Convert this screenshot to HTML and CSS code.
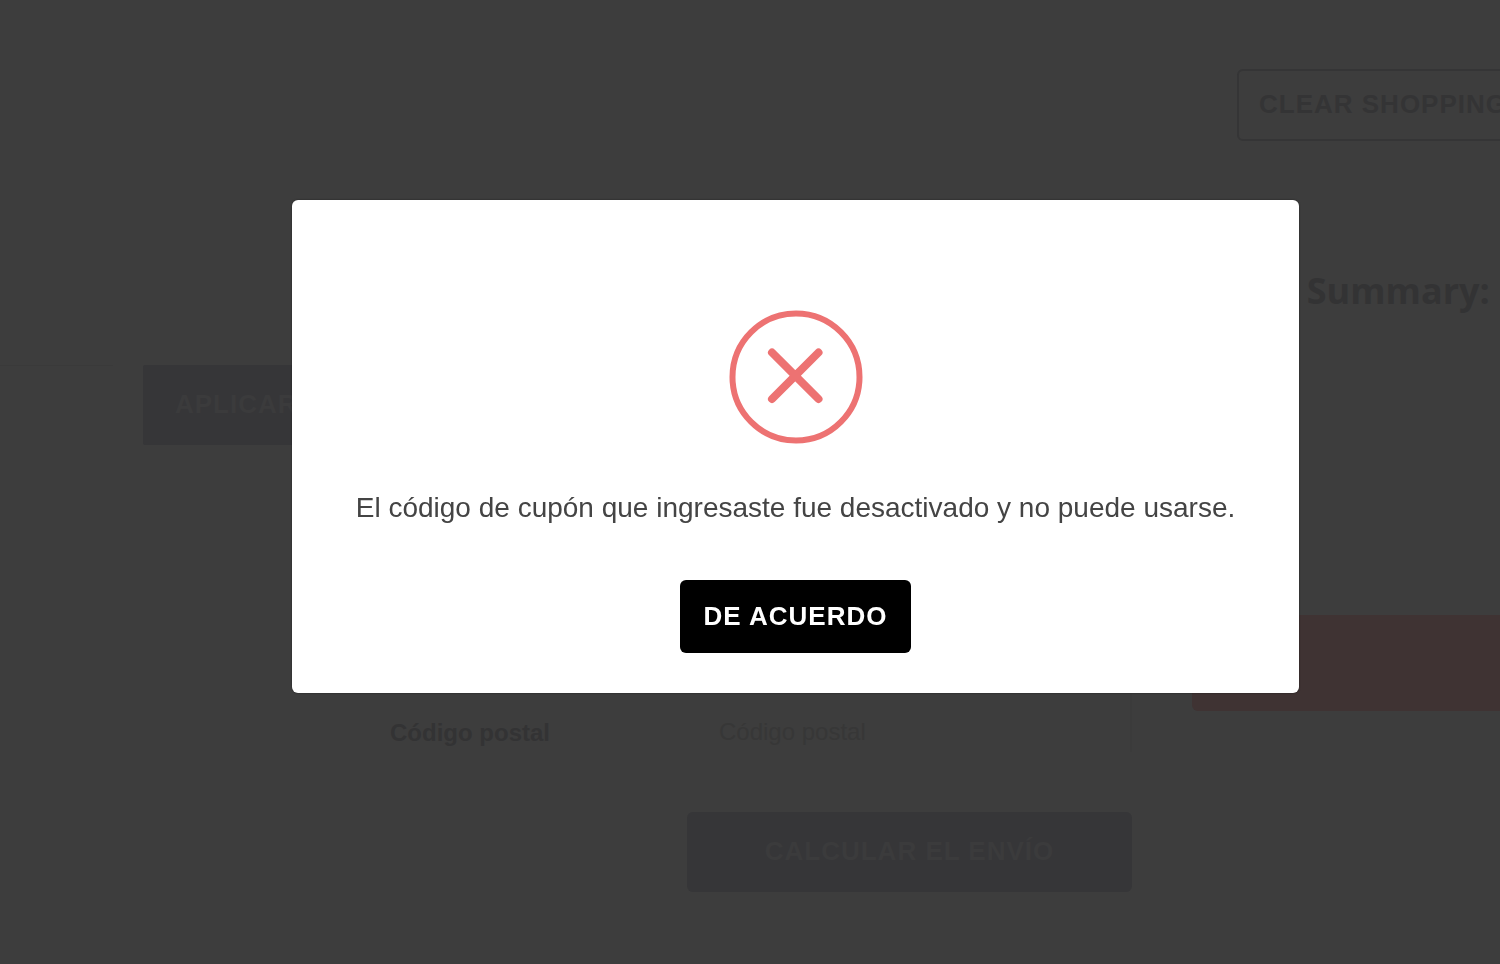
FILE: index.html
```html
<!DOCTYPE html>
<html lang="es">
<head>
    <meta charset="UTF-8">
    <meta name="viewport" content="width=device-width, initial-scale=1.0">
    <title>Carrito</title>
    <link rel="stylesheet" href="styles.css">
</head>
<body>
    <div class="page">
        <header class="cart-header">
            <button type="button" class="btn btn-outline">Clear shopping cart</button>
        </header>
        <div class="cart">
            <main class="cart-main">
                <form class="coupon">
                    <input class="coupon-input" type="text" aria-label="Código de cupón">
                    <button type="button" class="btn btn-muted coupon-btn">Aplicar</button>
                </form>
                <form class="shipping">
                    <label for="zip">Código postal</label>
                    <input id="zip" class="shipping-input" type="text" placeholder="Código postal">
                    <button type="button" class="btn btn-muted shipping-btn">Calcular el envío</button>
                </form>
            </main>
            <aside class="summary">
                <h2>Order Summary:</h2>
                <button type="button" class="btn btn-checkout" aria-label="Checkout"></button>
            </aside>
        </div>
    </div>

    <!-- Alert -->
    <div class="overlay">
        <div class="modal" role="alertdialog" aria-modal="true" aria-describedby="modal-text">
            <svg class="modal-icon" viewBox="0 0 134 134" aria-hidden="true">
                <circle cx="67" cy="67" r="63.5" />
                <path d="M43 42.5 L89.5 89 M89.5 42.5 L43 89" />
            </svg>
            <p id="modal-text">El código de cupón que ingresaste fue desactivado y no puede usarse.</p>
            <button type="button" class="btn btn-confirm">De acuerdo</button>
        </div>
    </div>
</body>
</html>
```
FILE: styles.css
```css
* {
    padding: 0;
    margin: 0;
    box-sizing: border-box;
}

body {
    min-height: 100vh;
    background-color: #3d3d3d;
    font-family: "Liberation Sans", Arial, sans-serif;
    color: #333334;
    overflow: hidden;
}

.btn {
    border: none;
    border-radius: 6px;
    font-family: inherit;
    font-size: 26px;
    font-weight: bold;
    line-height: 32px;
    letter-spacing: 1px;
    text-transform: uppercase;
    white-space: nowrap;
}

.page {
    padding-top: 69px;
    overflow: hidden;
}

/* Header */
.cart-header {
    display: grid;
    grid-template-columns: 263px;
    justify-content: end;
}

.btn-outline {
    width: max-content;
    height: 72px;
    padding: 0 20px 2px;
    border: 2px solid #353536;
    background: none;
    color: #343435;
}

/* Cart */
.cart {
    display: grid;
    grid-template-columns: minmax(0, 1fr) 308px;
    gap: 60px;
}

.cart-main {
    padding-top: 224px;
}

.btn-muted {
    height: 80px;
    padding: 0 32px 2px;
    background-color: #363638;
    color: #3b3b3c;
}

.coupon {
    display: flex;
    gap: 30px;
}

.coupon-input {
    width: 113px;
    height: 80px;
    border: none;
    border-top: 1px solid #3a3a3a;
    background: none;
}

.coupon-btn {
    border-radius: 2px;
}

.shipping {
    display: grid;
    grid-template-columns: 297px 445px;
    justify-content: end;
    align-items: center;
    row-gap: 60px;
    margin-top: 247px;
    font-size: 24px;
}

.shipping label {
    padding-top: 22px;
    font-weight: bold;
}

.shipping-input {
    height: 60px;
    padding: 20px 32px 0;
    border: none;
    border-right: 2px solid #3b3b3b;
    background: none;
    font-family: inherit;
    font-size: 24px;
}

.shipping-input::placeholder {
    color: #373737;
}

.shipping-btn {
    grid-column: 2;
}

.summary {
    padding-top: 126px;
}

.summary h2 {
    font-family: "Open Sans", "Noto Sans", sans-serif;
    font-size: 36px;
    line-height: 48px;
    white-space: nowrap;
}

.btn-checkout {
    width: calc(100% + 60px);
    height: 96px;
    margin-top: 300px;
    background-color: #3f3333;
}

/* Modal */
.overlay {
    position: fixed;
    inset: 0;
    padding: 200px 201px 0 292px;
}

.modal {
    display: flex;
    flex-direction: column;
    align-items: center;
    padding: 110px 40px 40px;
    border-radius: 6px;
    background-color: #fff;
    box-shadow: 0 0 2px rgba(0, 0, 0, 0.5);
}

.modal-icon {
    width: 134px;
    fill: none;
    stroke: #ed7272;
    stroke-width: 6;
}

.modal-icon path {
    stroke-width: 8;
    stroke-linecap: round;
}

.modal p {
    margin: 48px 0 56px;
    font-size: 28px;
    line-height: 32px;
    color: #444;
}

.btn-confirm {
    height: 73px;
    padding: 0 24px 2px;
    background-color: #000;
    color: #fff;
}
```
